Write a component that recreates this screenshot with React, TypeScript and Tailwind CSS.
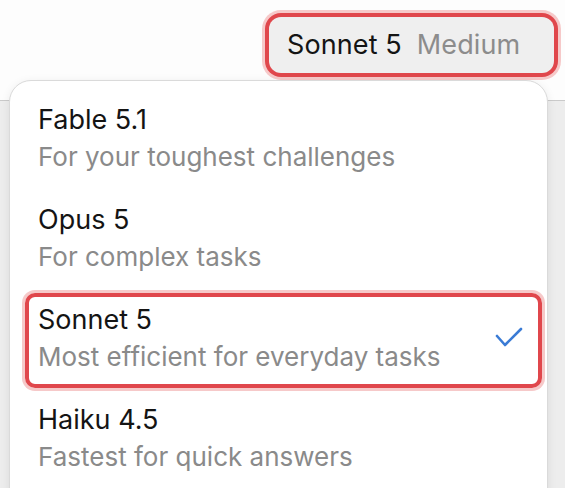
import React from "react";

const items = [
  { title: "Fable 5.1", sub: "For your toughest challenges" },
  { title: "Opus 5", sub: "For complex tasks" },
  { title: "Sonnet 5", sub: "Most efficient for everyday tasks", selected: true },
  { title: "Haiku 4.5", sub: "Fastest for quick answers" },
];

export default function App() {
  return (
    <div
      className="relative w-[565px] h-[488px] overflow-hidden bg-[#ededed]"
      style={{ fontFamily: "Inter, 'Noto Sans', sans-serif" }}
    >
      <div className="h-[101px] bg-[#fdfdfd] border-b border-[#cacaca] flex justify-end items-start pt-[17px] pr-[11px]">
        <button className="h-[56px] w-[285px] rounded-[12px] bg-[#efefef] flex items-center pl-[18px] gap-[15px] text-[27px] tracking-[0.1px] shadow-[0_0_0_4px_#e0474c,0_0_0_7px_#f6c9c9]">
          <span className="text-[#141414]">Sonnet 5</span>
          <span className="text-[#8c8c8c]">Medium</span>
        </button>
      </div>

      <div className="absolute left-[9px] top-[80px] w-[539px] h-[440px] bg-white rounded-[22px] border border-[#dadada] shadow-[0_2px_10px_rgba(0,0,0,0.08)] pl-[15px] pr-[5px] pt-[12px] flex flex-col gap-[5px]">
        {items.map((it) => (
          <div
            key={it.title}
            className={
              "h-[95px] rounded-[10px] pl-[13px] pr-[19px] pt-[10px] flex items-start justify-between " +
              (it.selected ? "shadow-[inset_0_0_0_4px_#e0474c,0_0_0_3px_#f6c9c9]" : "")
            }
          >
            <div className="flex flex-col">
              <span className="text-[27px] leading-[34px] text-[#141414]">{it.title}</span>
              <span className="mt-[3px] text-[26px] leading-[34px] text-[#8a8a8a]">{it.sub}</span>
            </div>
            {it.selected && (
              <svg width="28" height="22" viewBox="0 0 28 22" className="mt-[24px]">
                <polyline
                  points="2,9 10,18 26,2"
                  fill="none"
                  stroke="#3a7bd5"
                  strokeWidth="2.6"
                  strokeLinecap="round"
                  strokeLinejoin="round"
                />
              </svg>
            )}
          </div>
        ))}
      </div>
    </div>
  );
}
